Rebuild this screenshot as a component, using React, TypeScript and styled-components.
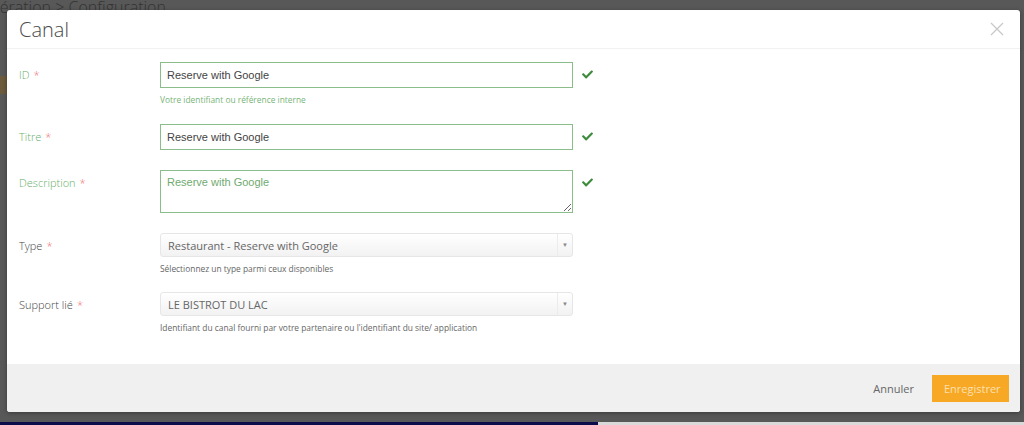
import React from 'react';
import styled, { createGlobalStyle } from 'styled-components';
import { FaCheck } from 'react-icons/fa';

const GlobalStyle = createGlobalStyle`
  html, body {
    margin: 0;
    padding: 0;
    height: 100%;
  }
  body {
    background: #585858;
    font-family: 'Open Sans', 'Liberation Sans', sans-serif;
    overflow: hidden;
  }
`;

const Page = styled.div`
  position: relative;
  width: 1024px;
  height: 425px;
  overflow: hidden;
  background: #585858;
`;

const Breadcrumb = styled.div`
  margin-left: -22px;
  margin-top: -4px;
  font-size: 16px;
  font-weight: 300;
  color: #333;
  white-space: nowrap;
`;

const SideTab = styled.div`
  position: absolute;
  left: 0;
  top: 76px;
  width: 7px;
  height: 18px;
  background: #6b5a3c;
`;

const BottomBar = styled.div`
  position: absolute;
  left: 0;
  right: 0;
  bottom: 0;
  height: 3px;
  display: flex;
  div:first-child {
    width: 598px;
    background: #0c0c4a;
  }
  div:last-child {
    flex: 1;
    background: #d9d9d9;
  }
`;

const Modal = styled.div`
  position: absolute;
  left: 7px;
  top: 10px;
  width: 1013px;
  height: 402px;
  background: #fff;
  border-radius: 3px;
  box-shadow: 0 1px 4px rgba(0, 0, 0, 0.35);
  display: flex;
  flex-direction: column;
  overflow: hidden;
`;

const Header = styled.header`
  height: 38px;
  border-bottom: 1px solid #f2f2f2;
  display: flex;
  align-items: center;
  justify-content: space-between;
  padding: 0 12px;
  h1 {
    margin: 0;
    font-size: 20px;
    font-weight: 300;
    color: #4a4a4a;
  }
`;

const Close = styled.button`
  border: none;
  background: none;
  padding: 0;
  margin-right: 2px;
  width: 16px;
  height: 16px;
  cursor: pointer;
  svg {
    display: block;
  }
`;

const Body = styled.form`
  flex: 1;
  padding: 13px 12px 0;
`;

const Row = styled.div<{ $space: number }>`
  display: flex;
  align-items: flex-start;
  margin-bottom: ${({ $space }) => $space}px;
`;

const Label = styled.label<{ $valid?: boolean }>`
  width: 141px;
  flex-shrink: 0;
  padding-top: 6px;
  font-size: 11px;
  font-weight: 300;
  line-height: 14px;
  color: ${({ $valid }) => ($valid ? '#6aae6a' : '#444')};
  span {
    color: #ef6f6f;
    margin-left: 4px;
  }
`;

const Control = styled.div`
  width: 413px;
`;

const TextInput = styled.input`
  box-sizing: border-box;
  width: 100%;
  height: 26px;
  border: 1px solid #8abd8a;
  border-radius: 0;
  padding: 0 6px;
  font-family: 'Liberation Sans', Arial, sans-serif;
  font-size: 11px;
  color: #444;
  outline: none;
`;

const TextArea = styled.textarea`
  box-sizing: border-box;
  display: block;
  width: 100%;
  height: 43px;
  border: 1px solid #8abd8a;
  border-radius: 0;
  padding: 5px 6px;
  font-family: 'Liberation Sans', Arial, sans-serif;
  font-size: 11px;
  color: #6faa6f;
  outline: none;
  resize: vertical;
`;

const Select = styled.div`
  box-sizing: border-box;
  height: 24px;
  display: flex;
  align-items: center;
  border: 1px solid #e6e6e6;
  border-radius: 3px;
  background: linear-gradient(#ffffff, #f2f2f2);
  font-size: 11px;
  color: #666;
  div:first-child {
    flex: 1;
    padding-left: 7px;
  }
  div:last-child {
    width: 14px;
    height: 100%;
    border-left: 1px solid #ececec;
    display: flex;
    align-items: center;
    justify-content: center;
    font-size: 6px;
    color: #888;
  }
`;

const Help = styled.div<{ $valid?: boolean }>`
  margin-top: 6px;
  font-size: 8.4px;
  line-height: 12px;
  color: ${({ $valid }) => ($valid ? '#78b478' : '#666')};
`;

const Tick = styled.div`
  padding: 7px 0 0 9px;
  color: #3e8b3e;
  font-size: 11px;
  line-height: 0;
`;

const Footer = styled.footer`
  height: 48px;
  background: #f0f0f0;
  display: flex;
  align-items: center;
  justify-content: flex-end;
  gap: 18px;
  padding-right: 11px;
`;

const Button = styled.button<{ $primary?: boolean }>`
  font-family: 'Open Sans', sans-serif;
  font-size: 11px;
  height: 27px;
  border: none;
  border-radius: 0;
  padding: ${({ $primary }) => ($primary ? '0 12px' : '0')};
  width: ${({ $primary }) => ($primary ? '77px' : 'auto')};
  background: ${({ $primary }) => ($primary ? '#f7a824' : 'transparent')};
  color: ${({ $primary }) => ($primary ? '#fde0b0' : '#666')};
  cursor: pointer;
`;

function Check() {
  return (
    <Tick>
      <FaCheck />
    </Tick>
  );
}

export default function App(): JSX.Element {
  return (
    <>
      <GlobalStyle />
      <Page>
        <Breadcrumb>Opération &gt; Configuration</Breadcrumb>
        <SideTab />
        <BottomBar>
          <div />
          <div />
        </BottomBar>

        <Modal>
          <Header>
            <h1>Canal</h1>
            <Close type="button" aria-label="Fermer">
              <svg width="14" height="14" viewBox="0 0 14 14">
                <path d="M1 1L13 13M13 1L1 13" stroke="#c8c8c8" strokeWidth="1.3" />
              </svg>
            </Close>
          </Header>

          <Body>
            <Row $space={18}>
              <Label $valid>
                ID<span>*</span>
              </Label>
              <Control>
                <TextInput defaultValue="Reserve with Google" />
                <Help $valid>Votre identifiant ou référence interne</Help>
              </Control>
              <Check />
            </Row>

            <Row $space={20}>
              <Label $valid>
                Titre<span>*</span>
              </Label>
              <Control>
                <TextInput defaultValue="Reserve with Google" />
              </Control>
              <Check />
            </Row>

            <Row $space={20}>
              <Label $valid>
                Description<span>*</span>
              </Label>
              <Control>
                <TextArea defaultValue="Reserve with Google" />
              </Control>
              <Check />
            </Row>

            <Row $space={17}>
              <Label>
                Type<span>*</span>
              </Label>
              <Control>
                <Select>
                  <div>Restaurant - Reserve with Google</div>
                  <div>▼</div>
                </Select>
                <Help>Sélectionnez un type parmi ceux disponibles</Help>
              </Control>
            </Row>

            <Row $space={0}>
              <Label>
                Support lié<span>*</span>
              </Label>
              <Control>
                <Select>
                  <div>LE BISTROT DU LAC</div>
                  <div>▼</div>
                </Select>
                <Help>
                  Identifiant du canal fourni par votre partenaire ou l'identifiant du site/ application
                </Help>
              </Control>
            </Row>
          </Body>

          <Footer>
            <Button type="button">Annuler</Button>
            <Button type="button" $primary>
              Enregistrer
            </Button>
          </Footer>
        </Modal>
      </Page>
    </>
  );
}
